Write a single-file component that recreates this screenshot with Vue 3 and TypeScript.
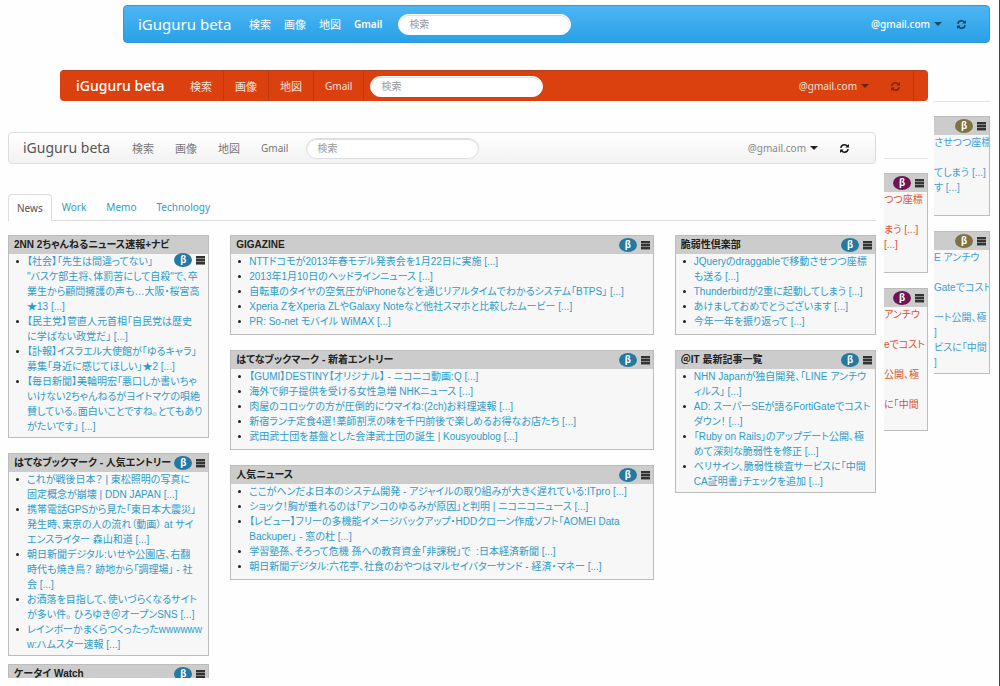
<script setup lang="ts">
interface Bar {
  theme: string
}
interface Card {
  title: string
  items: string[]
  wrapped?: boolean
  dense?: boolean
  cut?: boolean
}
interface Slice {
  theme: string
  cards: string[][]
}

const bars: Bar[] = [{ theme: 'blue' }, { theme: 'red' }, { theme: 'light' }]
const services: string[] = ['検索', '画像', '地図', 'Gmail']
const tabs: string[] = ['News', 'Work', 'Memo', 'Technology']

const columns: Card[][] = [
  [
    {
      title: '2NN 2ちゃんねるニュース速報+ナビ',
      wrapped: true,
      dense: true,
      items: [
        '【社会】「先生は間違ってない」\n"バスケ部主将、体罰苦にして自殺"で、卒\n業生から顧問擁護の声も…大阪・桜宮高\n★13 [...]',
        '【民主党】菅直人元首相「自民党は歴史\nに学ばない政党だ」 [...]',
        '【訃報】イスラエル大使館が「ゆるキャラ」\n募集「身近に感じてほしい」★2 [...]',
        '【毎日新聞】美輪明宏「悪口しか書いちゃ\nいけない2ちゃんねるがヨイトマケの唄絶\n賛している。面白いことですね。とてもあり\nがたいです」 [...]',
      ],
    },
    {
      title: 'はてなブックマーク - 人気エントリー',
      dense: true,
      items: [
        'これが戦後日本？ | 東松照明の写真に\n固定概念が崩壊 | DDN JAPAN [...]',
        '携帯電話GPSから見た「東日本大震災」\n発生時、東京の人の流れ（動画） at サイ\nエンスライター 森山和道 [...]',
        '朝日新聞デジタル:いせや公園店、右翻\n時代も焼き鳥？ 跡地から「調理場」 - 社\n会 [...]',
        'お洒落を目指して、使いづらくなるサイト\nが多い件。 ひろゆき＠オープンSNS [...]',
        'レインボーかまくらつくったったwwwwww\nw:ハムスター速報 [...]',
      ],
    },
    { title: 'ケータイ Watch', cut: true, items: [] },
  ],
  [
    {
      title: 'GIGAZINE',
      items: [
        'NTTドコモが2013年春モデル発表会を1月22日に実施 [...]',
        '2013年1月10日のヘッドラインニュース [...]',
        '自転車のタイヤの空気圧がiPhoneなどを通じリアルタイムでわかるシステム「BTPS」 [...]',
        'Xperia ZをXperia ZLやGalaxy Noteなど他社スマホと比較したムービー [...]',
        'PR: So-net モバイル WiMAX [...]',
      ],
    },
    {
      title: 'はてなブックマーク - 新着エントリー',
      items: [
        '【GUMI】DESTINY【オリジナル】 ‐ ニコニコ動画:Q [...]',
        '海外で卵子提供を受ける女性急増 NHKニュース [...]',
        '肉屋のコロッケの方が圧倒的にウマイね:(2ch)お料理速報 [...]',
        '新宿ランチ定食4選！薬師割烹の味を千円前後で楽しめるお得なお店たち [...]',
        '武田武士団を基盤とした会津武士団の誕生 | Kousyoublog [...]',
      ],
    },
    {
      title: '人気ニュース',
      items: [
        'ここがヘンだよ日本のシステム開発 - アジャイルの取り組みが大きく遅れている:ITpro [...]',
        'ショック！胸が垂れるのは「アンコのゆるみが原因」と判明 | ニコニコニュース [...]',
        '【レビュー】フリーの多機能イメージバックアップ・HDDクローン作成ソフト「AOMEI Data\nBackuper」 - 窓の杜 [...]',
        '学習塾孫、そろって危機 孫への教育資金「非課税」で  :日本経済新聞 [...]',
        '朝日新聞デジタル:六花亭、社食のおやつはマルセイバターサンド - 経済・マネー [...]',
      ],
    },
  ],
  [
    {
      title: '脆弱性倶楽部',
      items: [
        'JQueryのdraggableで移動させつつ座標\nも送る [...]',
        'Thunderbirdが2重に起動してしまう [...]',
        'あけましておめでとうございます [...]',
        '今年一年を振り返って [...]',
      ],
    },
    {
      title: '＠IT 最新記事一覧',
      dense: true,
      items: [
        'NHN Japanが独自開発、「LINE アンチウ\nィルス」 [...]',
        'AD: スーパーSEが語るFortiGateでコスト\nダウン！ [...]',
        '「Ruby on Rails」のアップデート公開、極\nめて深刻な脆弱性を修正 [...]',
        'ベリサイン、脆弱性検査サービスに「中間\nCA証明書」チェックを追加 [...]',
      ],
    },
  ],
]

const slices: Slice[] = [
  {
    theme: 'plum',
    cards: [
      ['つつ座標', '', 'まう [...]', '[...]', ''],
      ['アンチウ', '', 'eでコスト', '', '公開、極', '', 'に「中間', ''],
    ],
  },
  {
    theme: 'olive',
    cards: [
      ['させつつ座標', '', 'てしまう [...]', 'す [...]', ''],
      ['E アンチウ', '', 'Gateでコスト', '', 'ート公開、極', ']', 'ビスに「中間', ']'],
    ],
  },
]

const linesOf = (text: string): string[] => text.split('\n')
</script>

<template>
  <div class="page">
    <header v-for="bar in bars" :key="bar.theme" class="bar" :class="bar.theme">
      <a class="brand" href="#">iGuguru beta</a>
      <nav class="services">
        <a v-for="s in services" :key="s" href="#">{{ s }}</a>
      </nav>
      <input class="search" type="search" placeholder="検索" aria-label="検索" />
      <button class="account" type="button">@gmail.com<span class="caret"></span></button>
      <button class="refresh" type="button" aria-label="更新">
        <svg viewBox="0 0 12 12" width="11" height="11" fill="none" stroke="currentColor" stroke-width="1.6">
          <path d="M2 5.2C2.4 3 4.1 1.9 6 1.9c1.4 0 2.5.6 3.2 1.5M10 6.8C9.6 9 7.9 10.1 6 10.1c-1.4 0-2.5-.6-3.2-1.5" />
          <path d="M10.8 1v4H6.9zM1.2 11V7h3.9z" fill="currentColor" stroke="none" />
        </svg>
      </button>
    </header>

    <main class="board">
      <nav class="tabs">
        <a v-for="(t, i) in tabs" :key="t" href="#" :class="{ active: i === 0 }">{{ t }}</a>
      </nav>
      <div class="columns">
        <div v-for="(col, c) in columns" :key="c" class="column">
          <section
            v-for="card in col"
            :key="card.title"
            class="card"
            :class="{ wrapped: card.wrapped, dense: card.dense, cut: card.cut }"
          >
            <div class="head">
              <h2>{{ card.title }}</h2>
              <span class="tools">
                <button class="badge" type="button">β</button>
                <button class="menu" type="button" aria-label="メニュー"></button>
              </span>
            </div>
            <ul v-if="card.items.length">
              <li v-for="item in card.items" :key="item">
                <a href="#"><span v-for="line in linesOf(item)" :key="line">{{ line }}</span></a>
              </li>
            </ul>
          </section>
        </div>
      </div>
    </main>

    <aside v-for="slice in slices" :key="slice.theme" class="slice" :class="slice.theme">
      <section v-for="(lines, n) in slice.cards" :key="n" class="card" :class="{ dense: n === 1 }">
        <div class="head">
          <span class="tools">
            <button class="badge" type="button">β</button>
            <button class="menu" type="button" aria-label="メニュー"></button>
          </span>
        </div>
        <div class="lines">
          <a v-for="(line, l) in lines" :key="l" href="#">{{ line }}</a>
        </div>
      </section>
    </aside>
  </div>
</template>

<style>
body {
  margin: 0;
  background: #fefefe;
}
</style>

<style scoped>
.page {
  --link: #2e9bc8;
  --badge: #23799f;
  box-sizing: border-box;
  min-height: 100vh;
  display: grid;
  grid-template-columns: 52px 63px minmax(0, 1fr) 8px 44px 6px 56px;
  grid-template-rows: auto auto auto;
  align-content: start;
  padding: 5px 9px 8px 8px;
  border-right: 1px solid #444;
  border-bottom: 1px solid #777;
  overflow: hidden;
  font-family: "Liberation Sans", "Noto Sans CJK JP", sans-serif;
  font-size: 10px;
  line-height: 15px;
  font-feature-settings: "palt";
}
a {
  color: inherit;
  text-decoration: none;
}
button {
  border: 0;
  padding: 0;
  background: none;
  color: inherit;
  font: inherit;
}

.bar {
  --gap: 21px;
  box-sizing: border-box;
  display: flex;
  align-items: center;
  padding-left: 14px;
  border-radius: 4px;
  font-family: "Noto Sans", "Noto Sans CJK JP", sans-serif;
  font-size: 11px;
}
.blue {
  --gap: 13px;
  grid-area: 1 / 3 / 2 / 8;
  height: 38px;
  padding-right: 22px;
  color: #fff;
  background: linear-gradient(#4db5f3, #29a1e8);
  border: 1px solid #3199d6;
}
.red {
  grid-area: 2 / 2 / 3 / 6;
  height: 31px;
  margin-top: 27px;
  padding-right: 14px;
  padding-left: 16px;
  color: #fbe3da;
  background: #db400f;
  border-top: 1px solid #b04020;
}
.light {
  grid-area: 3 / 1 / 4 / 4;
  align-self: start;
  height: 32px;
  margin-top: 31px;
  padding-right: 25px;
  color: #777;
  background: linear-gradient(#fff, #f2f2f2);
  border: 1px solid #ddd;
}
.brand {
  width: 90px;
  font-size: 15px;
  line-height: 20px;
  white-space: nowrap;
}
.light .brand {
  width: 86px;
  font-size: 14px;
  color: #555;
}
.red .brand {
  width: 88px;
  font-size: 14px;
  font-weight: 500;
  color: #fff;
}
.services {
  display: flex;
  align-self: stretch;
  gap: var(--gap);
  padding: 0 16px 0 21px;
}
.services a {
  display: flex;
  align-items: center;
}
.services a:nth-child(4) {
  font-size: 10px;
}
.blue .services a:nth-child(4) {
  font-weight: 600;
}
.red .services {
  gap: 0;
  padding: 0 6px 0 15px;
}
.red .services a {
  padding: 0 11px;
  border-right: 1px solid #bd3a10;
}
.light .services {
  padding-right: 18px;
  padding-left: 23px;
}
.search {
  box-sizing: border-box;
  width: 173px;
  height: 21px;
  padding: 0 10px;
  border: 1px solid #fff;
  border-radius: 11px;
  background: #fff;
  font: inherit;
  font-size: 10px;
  box-shadow: inset 0 1px 1px #ddd;
}
.light .search {
  border-color: #ddd;
}
.search::placeholder {
  color: #999;
  opacity: 1;
}
.account {
  display: flex;
  align-items: center;
  gap: 4px;
  margin-left: auto;
  font-size: 10px;
}
.blue .account {
  font-weight: 500;
}
.light .account {
  color: #888;
}
.caret {
  border: 4px solid transparent;
  border-top-color: #222;
  border-bottom: 0;
}
.blue .caret {
  border-top-color: #164b6b;
}
.red .caret {
  border-top-color: #6d200a;
}
.refresh {
  display: flex;
  align-items: center;
  margin-left: 21px;
  color: #111;
}
.blue .refresh {
  margin-left: 14px;
  color: #123c56;
}
.red .refresh {
  align-self: stretch;
  padding-right: 12px;
  border-right: 1px solid #bd3a10;
  color: #7b2409;
}

.board {
  grid-area: 3 / 1 / 4 / 4;
  padding-top: 93px;
}
.tabs {
  display: flex;
  height: 26px;
  border-bottom: 1px solid #ddd;
  font-family: "Noto Sans", sans-serif;
  font-size: 10px;
  color: var(--link);
}
.tabs a {
  padding: 0 10px;
  line-height: 26px;
}
.tabs .active {
  padding: 0 8px;
  margin-bottom: -1px;
  border: 1px solid #ddd;
  border-bottom: 0;
  border-radius: 4px 4px 0 0;
  background: #fefefe;
  color: #555;
}
.columns {
  display: grid;
  grid-template-columns: minmax(0, 201fr) minmax(0, 423fr) minmax(0, 201fr);
  gap: 21px;
  align-items: start;
  margin-top: 14px;
}
.column,
.slice {
  display: flex;
  flex-direction: column;
  gap: 15px;
}
.card {
  box-sizing: border-box;
  border: 1px solid #bcbcbc;
  background: #f7f7f7;
  overflow: hidden;
}
.head {
  position: relative;
  height: 18px;
  background: #ccc;
}
h2 {
  margin: 0;
  padding-left: 5px;
  font-size: 10px;
  line-height: 18px;
  font-weight: 700;
  color: #222;
  white-space: nowrap;
}
.tools {
  position: absolute;
  top: 2px;
  right: 3px;
  display: flex;
  align-items: center;
  gap: 4px;
}
.wrapped .tools {
  top: 17px;
}
.badge {
  width: 18px;
  height: 14px;
  border-radius: 9px / 7px;
  background: var(--badge);
  color: #fff;
  font-size: 10px;
  font-weight: 700;
  line-height: 14px;
}
.menu {
  width: 9px;
  height: 9px;
  background: repeating-linear-gradient(#333 0 2px, #888 2px 3px);
}
ul {
  margin: 0;
  padding: 0 0 5px 18px;
  list-style: none;
}
.dense ul,
.dense .lines {
  padding-bottom: 3px;
}
li {
  position: relative;
  color: var(--link);
}
li span {
  display: block;
  width: fit-content;
  white-space: pre;
}
li::before {
  content: "";
  position: absolute;
  left: -11px;
  top: 6px;
  width: 3px;
  height: 3px;
  border-radius: 2px;
  background: #222;
}
.cut {
  height: 14px;
  margin-top: -7px;
  border-bottom: 0;
}

.slice {
  padding-top: 14px;
  border-top: 1px solid #e6e6e6;
  align-self: start;
}
.slice .card {
  border-left: 0;
}
.slice .lines {
  padding-bottom: 5px;
  color: var(--link);
}
.slice .dense .lines {
  padding-bottom: 3px;
}
.lines a {
  display: block;
  height: 15px;
  white-space: nowrap;
}
.plum {
  --badge: #6d1455;
  --link: #d9532f;
  grid-area: 3 / 5 / 4 / 6;
  margin-top: 57px;
}
.olive {
  --badge: #7d7342;
  --link: #3f9fd0;
  grid-area: 3 / 7 / 4 / 8;
}
</style>
